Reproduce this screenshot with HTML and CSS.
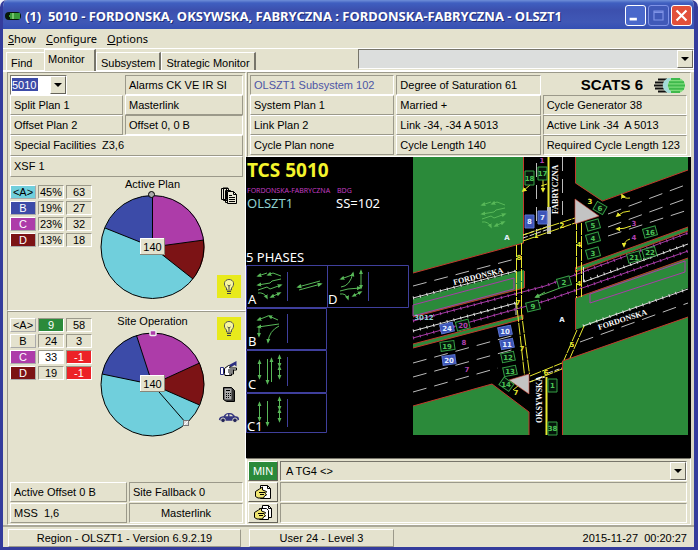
FILE: index.html
```html
<!DOCTYPE html>
<html lang="en">
<head>
<meta charset="utf-8">
<title>(1) 5010 - FORDONSKA, OKSYWSKA, FABRYCZNA</title>
<link rel="stylesheet" href="styles.css">
</head>
<body>
<div class="window">
  <header class="titlebar">
    <svg class="app-icon" viewBox="0 0 16 10" aria-hidden="true"><rect x="0" y="1" width="16" height="8" rx="4" fill="#071808"/><path d="M5 3h10M4 5h11M5 7h10" stroke="#48c24a" stroke-width="1.6"/><path d="M8 2v6" stroke="#b6f0a0"/></svg>
    <h1>(1)&nbsp; 5010 - FORDONSKA, OKSYWSKA, FABRYCZNA : FORDONSKA-FABRYCZNA - OLSZT1</h1>
    <div class="caption-buttons">
      <button class="cap" aria-label="Minimize"><svg viewBox="0 0 21 21"><rect x="4" y="13" width="8" height="3" fill="#fff"/></svg></button>
      <button class="cap cap-max" aria-label="Maximize" disabled><svg viewBox="0 0 21 21"><path d="M5.500 5.500h10v10h-10zM5 7h11" fill="none" stroke="#7f93e6" stroke-width="1.300"/></svg></button>
      <button class="cap cap-close" aria-label="Close"><svg viewBox="0 0 21 21"><path d="M5 5l11 11M16 5L5 16" stroke="#fff" stroke-width="2.400"/></svg></button>
    </div>
  </header>
  <nav class="menubar">
    <button><u>S</u>how</button><button><u>C</u>onfigure</button><button><u>O</u>ptions</button>
  </nav>
  <div class="tabrow">
    <button class="tab tab-first">Find</button><button class="tab tab-on">Monitor</button><button class="tab">Subsystem</button><button class="tab">Strategic Monitor</button>
    <div class="combo combo-wide"><input type="text" aria-label="Message"><button aria-label="Open list"><svg viewBox="0 0 8 4"><path d="M0 0h8L4 4z"/></svg></button></div>
  </div>

  <main class="main">
    <section class="left">
      <div class="group group-plan">
        <div class="pair">
          <div class="combo combo-site"><input type="text" value="5010" aria-label="Site"><button aria-label="Open list"><svg viewBox="0 0 8 4"><path d="M0 0h8L4 4z"/></svg></button></div>
          <div class="cell">Alarms CK VE IR SI</div>
          <div class="cell up">Split Plan 1</div><div class="cell up">Masterlink</div>
          <div class="cell up">Offset Plan 2</div><div class="cell">Offset 0, 0 B</div>
          <div class="cell up wide">Special Facilities&nbsp; Z3,6</div>
          <div class="cell up wide">XSF 1</div>
        </div>
        <div class="plan">
          <table class="phases">
            <tr><th class="pa">&lt;A&gt;</th><td>45%</td><td>63</td></tr>
            <tr><th class="pb">B</th><td>19%</td><td>27</td></tr>
            <tr><th class="pc">C</th><td>23%</td><td>32</td></tr>
            <tr><th class="pd">D</th><td>13%</td><td>18</td></tr>
          </table>
          <div class="chart">
            <h2>Active Plan</h2>
            <svg viewBox="99 191 107 109">
              <circle cx="152.500" cy="247" r="51.500" fill="#70cfdc"/>
              <path d="M152.500 247V195.500A51.500 51.500 0 0 1 204 240z" fill="#ad3ca9"/>
              <path d="M152.500 247L204 240A51.500 51.500 0 0 1 193 279z" fill="#7c1315"/>
              <path d="M152.500 247L105 228A51.500 51.500 0 0 1 152.500 195.500z" fill="#3c4ba8"/>
              <path d="M152.500 195.500V247L204 240M152.500 247L193 279M152.500 247L105 228" fill="none" stroke="#000"/>
              <circle cx="152.500" cy="247" r="51.500" fill="none" stroke="#000"/>
              <circle cx="151.500" cy="194.500" r="3" fill="#aaa" stroke="#000"/>
              <rect x="140" y="238" width="25" height="17" fill="#e4e2ce"/><path d="M140.500 255v-16.500H165" fill="none" stroke="#fff"/><path d="M140 254.500h24.500V238" fill="none" stroke="#888679"/>
              <text x="152.500" y="251" class="svg-label">140</text>
            </svg>
          </div>
          <div class="icons">
            <button class="ico" aria-label="Plans"><svg width="18" height="18" viewBox="0 0 18 18"><g fill="#e9e7d6" stroke="#000"><path d="M1.500 1.500h5v11h-5zM3.500 1.500h5v12h-5zM5.500 3.500h5v12h-5z"/><path d="M7.500 4.500h6l3 3v9h-9z"/></g><path d="M13.500 4.500v3h3M9 8.500h3M9 10.500h6M9 12.500h6M9 14.500h6M3 1h5" stroke="#000" fill="none"/></svg></button>
            <button class="ico bulb" aria-label="Lamp"><svg width="14" height="18" viewBox="0 0 14 18"><path d="M4.500 10C1 7 2 1.500 7 1.500S13 7 9.500 10v2h-5z" fill="#f7f7a0" stroke="#555"/><path d="M5 13.500h4M5 15.500h4M7 8v3M5.500 7L7 8l1.500-1" stroke="#444" fill="none"/></svg></button>
          </div>
        </div>
      </div>
      <div class="group group-site">
        <div class="plan">
          <table class="phases">
            <tr><th>&lt;A&gt;</th><td class="go">9</td><td>58</td></tr>
            <tr><th>B</th><td>24</td><td>3</td></tr>
            <tr><th class="pc">C</th><td class="wh">33</td><td class="neg">-1</td></tr>
            <tr><th class="pd">D</th><td>19</td><td class="neg">-1</td></tr>
          </table>
          <div class="chart">
            <h2>Site Operation</h2>
            <svg viewBox="99 329 107 109">
              <circle cx="152.500" cy="385.500" r="51.500" fill="#70cfdc"/>
              <path d="M152.500 385.500L136.500 336.500A51.500 51.500 0 0 1 199.500 364z" fill="#ad3ca9"/>
              <path d="M152.500 385.500L199.500 364A51.500 51.500 0 0 1 199.500 406z" fill="#7c1315"/>
              <path d="M152.500 385.500L102 375A51.500 51.500 0 0 1 136.500 336.500z" fill="#3c4ba8"/>
              <path d="M136.500 336.500l16 49L199.500 364M152.500 385.500L199.500 406M152.500 385.500L102 375M152.500 385.500L186 424" fill="none" stroke="#000"/>
              <circle cx="152.500" cy="385.500" r="51.500" fill="none" stroke="#000"/>
              <rect x="150" y="331.500" width="6" height="5" rx="1" fill="#ad3ca9" stroke="#eee" stroke-width="1.500"/>
              <rect x="183.500" y="421.500" width="5" height="5" fill="#ddd" stroke="#777"/><path d="M184 426l4-4" stroke="#fff"/>
              <rect x="140" y="376" width="25" height="17" fill="#e4e2ce"/><path d="M140.500 393v-16.500H165" fill="none" stroke="#fff"/><path d="M140 392.500h24.500V376" fill="none" stroke="#888679"/>
              <text x="152.500" y="389" class="svg-label">140</text>
            </svg>
          </div>
          <div class="icons">
            <button class="ico bulb" aria-label="Lamp"><svg width="14" height="18" viewBox="0 0 14 18"><path d="M4.500 10C1 7 2 1.500 7 1.500S13 7 9.500 10v2h-5z" fill="#f7f7a0" stroke="#555"/><path d="M5 13.500h4M5 15.500h4M7 8v3M5.500 7L7 8l1.500-1" stroke="#444" fill="none"/></svg></button>
            <button class="ico" aria-label="Manual control"><svg width="18" height="16" viewBox="0 0 18 16"><path d="M.500 7.500h3v7h-3z" fill="#fff" stroke="#2c2e80"/><path d="M4.500 13.500v-5l4-3 2 .5-1 2h7v2h-3v4h-2v1.500H5z" fill="#fff" stroke="#000"/><path d="M8 10h6M8 12h5M9 14h3" stroke="#000"/><path d="M9 5l7.500-4v5.500l-2-1.500-3 2z" fill="#2c2e80"/></svg></button>
            <button class="ico" aria-label="Controller"><svg width="14" height="16" viewBox="0 0 14 16"><path d="M1.500 1.500h8l3 3v11h-8l-3-2z" fill="#333" stroke="#000"/><path d="M2.500 2.500h7v11h-7z" fill="#aaa"/><path d="M4 4.500h4M4 7.500h1M6 7.500h1M8 7.500h1M4 9.500h1M6 9.500h1M8 9.500h1M4 11.500h1M6 11.500h1" stroke="#000"/></svg></button>
            <button class="ico" aria-label="Vehicles"><svg width="22" height="12" viewBox="0 0 24 12"><path d="M1 8c0-3 3-4 5-4 2-3 4-3.500 7-3.500 3 0 4 2 6 3.500 3 0 4 1 4 4l-2 1H3z" fill="#34357f"/><path d="M8 4c1-2 2-2.200 3-2.200V4zM12.500 1.800c2 0 3 1 4 2.200h-4z" fill="#e4e2ce"/><circle cx="5.500" cy="8.500" r="2.500" fill="#222457" stroke="#e4e2ce"/><circle cx="18.500" cy="8.500" r="2.500" fill="#222457" stroke="#e4e2ce"/></svg></button>
          </div>
        </div>
        <div class="pair pair-foot">
          <div class="cell up">Active Offset 0 B</div><div class="cell">Site Fallback 0</div>
          <div class="cell up">MSS&nbsp; 1,6</div><div class="cell mid">Masterlink</div>
        </div>
      </div>
    </section>

    <section class="right">
      <div class="summary">
        <div class="cell link">OLSZT1 Subsystem 102</div><div class="cell">Degree of Saturation 61</div>
        <div class="brand"><strong>SCATS 6</strong><svg width="31" height="15" viewBox="0 0 31 15"><path d="M4 1.500h9M1 4.500h9M0 7.500h9M1 10.500h9M4 13.500h9" stroke="#111" stroke-width="1.800"/><path d="M14 0C7 3 7 12 14 15h5C12 11 12 4 19 0z" fill="#a4dcd9"/><path d="M19 0C12 4 12 11 19 15h6q6-2 6-7.500T25 0z" fill="#7fdc7c"/><path d="M17 1h9M15 4.200h15M14 7.500h17M15 10.800h15M17 14h9" stroke="#3fb94c" stroke-width="2"/></svg></div>
        <div class="cell up">System Plan 1</div><div class="cell up">Married +</div><div class="cell">Cycle Generator 38</div>
        <div class="cell up">Link Plan 2</div><div class="cell up">Link -34, -34 A 5013</div><div class="cell">Active Link -34&nbsp; A 5013</div>
        <div class="cell up">Cycle Plan none</div><div class="cell up">Cycle Length 140</div><div class="cell">Required Cycle Length 123</div>
      </div>

      <div class="canvas">
      <svg class="map" viewBox="246 157 445 301" preserveAspectRatio="xMinYMin meet">
        <defs>
          <marker id="head" viewBox="0 0 6 6" refX="4" refY="3" markerWidth="5" markerHeight="5" markerUnits="userSpaceOnUse" orient="auto-start-reverse"><path d="M0 .500L6 3 0 5.500z" fill="#58b858"/></marker>
          <marker id="yhead" viewBox="0 0 6 6" refX="4" refY="3" markerWidth="5" markerHeight="5" markerUnits="userSpaceOnUse" orient="auto"><path d="M0 0L6 3 0 6z" fill="#e8e830"/></marker>
          <g id="flow" class="arrow"><path d="M10 2L1 5"/><path d="M24 5l-8-3-5 2"/><path d="M24 8l-9 2-2 2-12 2"/><path d="M1 19l9-3 3 2 11-4"/><path d="M1 22q6-1 9 5"/><path d="M23 22l-9 4" class="both"/></g>
        </defs>

        <text x="247" y="177" class="site-name">TCS 5010</text>
        <text x="247" y="193" class="tiny-title">FORDONSKA-FABRYCZNA</text><text x="337" y="193" class="tiny-title">BDG</text>
        <text x="247" y="208" class="info cyan">OLSZT1</text><text x="336" y="208" class="info">SS=102</text>
        <text x="246" y="262" class="info">5 PHASES</text>

        <g class="frame">
          <path d="M246.500 265.500h162v42h-162zM327.500 265.500v42M246.500 308.500h80v41h-80zM246.500 350.500h80v42h-80zM246.500 393.500h80v39h-80z"/>
          <path d="M287.500 272v29M368.500 272v29M287.500 314v29M287.500 357v29M287.500 399v28"/>
        </g>
        <g class="info"><text x="248" y="304">A</text><text x="328" y="304">D</text><text x="248" y="346">B</text><text x="248" y="389">C</text><text x="247" y="431">C1</text></g>
        <use href="#flow" x="257" y="271"/>
        <g class="arrow">
          <path d="M320 281l-22 6"/><path d="M299 290l22-6"/>
          <path d="M352 275l-11 4"/><path d="M341 287q9-1 12-14"/><path d="M340 291l8-2 12-1"/><path d="M361 271v17" class="both"/><path d="M340 294q6-1 8 5"/><path d="M361 292l-8 4" class="both"/>
          <path d="M268 316l-10 4"/><path d="M278 320l-9-4"/><path d="M279 324l-21 3"/><path d="M279 326q-10 5-11 16"/><path d="M259 327v9"/>
          <path d="M259.500 361v17" class="both"/><path d="M267.500 359v24"/><path d="M271.500 382v-23"/><path d="M279.500 356v10" class="both"/><path d="M279.500 367v11" class="both"/>
          <path d="M259.500 403v17" class="both"/><path d="M267.500 401v24"/><path d="M279.500 398v11" class="both"/><path d="M279.500 410v11" class="both"/>
        </g>

        <g class="grass">
          <path d="M413 157h110v86l-110 30zM413 299l111-29v18l-111 29zM413 344l110-29v4l-110 29zM413 406l79-22 37 28v23H413zM575 157h113v13l-86 31-27-18zM575 268l113-41v4l-113 41zM575 298l113-40v30l-113 42zM562 361l126-44v118H562z"/>
        </g>
        <g class="kerb">
          <path d="M523.500 157v86l-110.500 30M524.500 271v17M413 317l111-29M413 344l110-29v4l-110 29M413 406l79-22 37 28v23M575.500 157v26l27 18 85.500-31M575.500 268v4l112.500-41M575 268l113-41M688 258l-112.500 40v32M688 317l-125.500 44v74"/>
        </g>
        <g class="white">
          <path d="M413 298l103-27M413 331l103-28v12M583.500 267v15L688 244M583 326l105-37"/>
          <path d="M413 298l103-27M413 331l103-28M584 281l104-37M583 326l105-37" class="ticks"/>
          <path d="M413 286l102-27M413 363l102-28M413 377l102-28M413 392l85-24M608 214l80-30M608 227l80-29M608 236l80-26M580 342l108-39M536.500 163v72M562.500 157v64" class="lanes"/>
          <path d="M523 235l26-9M523 238l26-9M529 382l16-5M548 373l14-5" stroke-dasharray="5 2"/>
          <path d="M547 207h4v27h-4z" fill="#bbb" stroke="none"/>
        </g>
        <g class="tram">
          <path d="M413 321l132-35 143-53M413 338l132-37 143-50M413 305l101-27v11l-101 27zM590 294l95-33v11l-95 31z"/>
          <path d="M413 321l132-35 143-53M413 338l132-37 143-50" class="ticks"/>
        </g>
        <g class="walk">
          <path d="M548.500 157v50M546.500 377v58" stroke-width="2"/>
          <path d="M516.500 245v58l8 72M521.500 243v70l8 61M523 235l52-17M523 241l52-18M576.500 218v80M581.500 223v74M577 330l-13 30M584 326l-14 32M530 376l32-13M530 382l32-13M513 390l16-13" stroke-dasharray="12 1"/>
          <path d="M530 185l-7 6" class="turn"/><path d="M543 178v13" class="turn"/><path d="M630 198q-6 1-8-3" class="turn"/><path d="M630 211q-7 0-13 5" class="turn"/><path d="M631 226q-7 3-14 3" class="turn"/><path d="M630 239q-6 2-6 7" class="turn"/>
          <path d="M547 184l-6 2"/>
        </g>
        <path d="M575 199l24 17-24 8zM509 380l20-6v20z" fill="#c3c3c3" stroke="#d84a3a" stroke-width=".600"/>
        <use href="#flow" x="481" y="200"/>
        <g class="arrow"><path d="M560 288l-24 9"/><path d="M545 292l-9 5"/></g>

        <g class="det">
          <path d="M525 171h9v14h-9zM538 167h9v13h-9zM548 379h9v13h-9zM548 422h9v13h-9z"/>
          <path class="on" d="M525 215h9v13h-9zM538 211h9v13h-9z"/>
          <g transform="rotate(-14 447 328)"><path class="on" d="M440.500 323.500h13v9h-13z"/><path d="M456.500 324.500h13v9h-13z"/></g>
          <g transform="rotate(-8 447 346)"><path d="M440.500 341.500h14v9h-14z"/></g>
          <g transform="rotate(-8 449 360)"><path class="on" d="M442.500 355.500h13v9h-13z"/></g>
          <g transform="rotate(-12 505 331)"><path class="on" d="M498.500 326.500h13v9h-13z"/></g>
          <g transform="rotate(-12 507 344)"><path class="on" d="M500.500 339.500h13v9h-13z"/></g>
          <g transform="rotate(-12 508 357)"><path d="M501.500 352.500h13v9h-13z"/></g>
          <g transform="rotate(-12 510 371)"><path d="M503.500 366.500h13v9h-13z"/></g>
          <g transform="rotate(35 506 384)"><path d="M500.500 379.500h12v9h-12z"/></g>
          <g transform="rotate(30 600 208)"><path d="M594.500 203.500h11v9h-11z"/></g>
          <g transform="rotate(-16 593 225)"><path d="M586.500 220.500h13v9h-13z"/></g>
          <g transform="rotate(-16 593 238)"><path d="M586.500 233.500h13v9h-13z"/></g>
          <g transform="rotate(-16 593 253)"><path d="M586.500 248.500h13v9h-13z"/></g>
          <g transform="rotate(-16 650 232)"><path d="M643.500 227.500h13v9h-13z"/></g>
          <g transform="rotate(-16 634 257)"><path d="M627.500 252.500h13v9h-13zM643.500 252.500h13v9h-13z"/></g>
          <g transform="rotate(-16 564 282)"><path d="M557.500 277.500h13v9h-13z"/></g>
          <g transform="rotate(-14 533 306)"><path d="M526.500 301.500h13v9h-13z"/></g>
        </g>
        <g class="num green-num">
          <text x="529.500" y="181">18</text><text x="542.500" y="176">17</text><text x="552.500" y="388">1</text><text x="552.500" y="431">38</text>
          <text x="447" y="349">19</text><text x="508" y="360">12</text><text x="510" y="374">13</text><text x="506" y="387">14</text>
          <text x="600" y="211">6</text><text x="593" y="228">5</text><text x="593" y="241">4</text><text x="593" y="256">3</text><text x="650" y="235">16</text><text x="634" y="260">21</text><text x="650" y="255">22</text><text x="564" y="285">2</text><text x="533" y="309">9</text>
        </g>
        <g class="num white-num"><text x="529.500" y="224">8</text><text x="542.500" y="220">7</text><text x="447" y="331">24</text><text x="449" y="363">20</text><text x="505" y="334">10</text><text x="507" y="347">11</text><text x="562" y="322">A</text><text x="507" y="240">A</text></g>
        <g class="num yellow-num"><text x="536" y="238">1</text><text x="519" y="260">8</text><text x="518" y="305">7</text><text x="522" y="351">7</text><text x="516" y="395">7</text><text x="546" y="375">6</text><text x="562" y="228">2</text><text x="590" y="204">3</text><text x="579" y="247">4</text><text x="579" y="286">4</text><text x="572" y="347">5</text></g>
        <g class="num mag-num"><text x="542" y="163">1</text><text x="463" y="328">20</text><text x="464" y="345">8</text><text x="467" y="372">7</text><text x="634" y="226">3</text><text x="634" y="240">4</text></g>
        <text x="424" y="320" class="num cyan">3012</text>
        <g class="street">
          <text transform="translate(454 285) rotate(-14)">FORDONSKA</text>
          <text transform="translate(599 330) rotate(-18)">FORDONSKA</text>
          <text transform="translate(558 214) rotate(-90)">FABRYCZNA</text>
          <text transform="translate(542 423) rotate(-90)">OKSYWSKA</text>
        </g>
      </svg>
      </div>

      <div class="messages">
        <button class="min">MIN</button>
        <div class="combo combo-msg"><input type="text" value="A TG4 &lt;&gt;" aria-label="Mode"><button aria-label="Open list"><svg viewBox="0 0 8 4"><path d="M0 0h8L4 4z"/></svg></button></div>
        <button class="note" aria-label="Note"><svg width="18" height="16" viewBox="0 0 18 16"><path d="M6.500 1.500h7l3 3v10h-10z" fill="#fff" stroke="#000"/><path d="M13.500 1.500v3h3" fill="none" stroke="#000"/><path d="M1.500 12.500v-5l4-2.500 3-2v3l4 1.500-1 2 1 1.500-2 1-1 2H4z" fill="#f0e670" stroke="#000"/><path d="M5 8.500h6M6 10.500h4" stroke="#000"/></svg></button>
        <div class="cell"></div>
        <button class="note" aria-label="Notes"><svg width="20" height="16" viewBox="0 0 20 16"><path d="M9.500.500h6l3 3v9h-9z" fill="#fff" stroke="#000"/><path d="M6.500 3.500h7l2 2v9h-9z" fill="#fff" stroke="#000"/><path d="M15.500.500v3h3" fill="none" stroke="#000"/><path d="M1.500 12.500v-5l4-2.500 3-2v3l4 1.500-1 2 1 1.500-2 1-1 2H4z" fill="#f0e670" stroke="#000"/><path d="M5 8.500h6M6 10.500h4" stroke="#000"/></svg></button>
        <div class="cell"></div>
      </div>
    </section>
  </main>

  <footer class="status">
    <span class="pane pane-region">Region - OLSZT1 - Version 6.9.2.19</span>
    <span class="pane pane-user">User 24 - Level 3</span>
    <time class="clock">2015-11-27&nbsp; 00:20:27</time>
  </footer>
</div>
</body>
</html>
```
FILE: styles.css
```css
* { box-sizing: border-box; }
:root { --face: #e4e2ce; --dark: #9b998a; --blue: #3c4ba8; }
body { margin: 0; background: #f4f4fb; color: #000; font: 11px/16px "Liberation Sans", Arial, sans-serif; }
button, input { font: inherit; color: inherit; padding: 0; margin: 0; border: 0; background: none; border-radius: 0; }
svg { display: block; }

.window { min-height: calc(100vh - 2px); margin-bottom: 2px; display: flex; flex-direction: column; background: var(--face); border: solid #343c9c; border-width: 0 4px 3px 3px; border-radius: 7px 7px 0 0; overflow: hidden; }

.titlebar { height: 29px; display: flex; align-items: center; gap: 4px; padding: 2px 2px 0 2px; background: linear-gradient(#6f8fd8 0, #3f5fc0 3px, #3c50ae 10px, #4058b6 22px, #3550b4 29px); color: #fff; }
.app-icon { width: 16px; height: 10px; }
.titlebar h1 { margin: 0; flex: 1; font: bold 13px/18px "Noto Sans", sans-serif; white-space: nowrap; text-shadow: 1px 1px #1d2c78; }
.caption-buttons { display: flex; gap: 2px; }
.cap { width: 21px; height: 21px; border: 1px solid #fff; border-radius: 3px; background: #4a68cb; }
.cap svg { width: 19px; height: 19px; }
.cap-max { border-color: #7f93e6; background: #4059b8; }
.cap-close { background: #e2503a; }

.menubar { height: 20px; display: flex; gap: 10px; padding: 0 5px; border-bottom: 1px solid #fff; font: 11px/18px "Noto Sans", sans-serif; }
.menubar u { text-underline-offset: 1px; }

.tabrow { height: 23px; display: flex; align-items: flex-start; padding-left: 3px; border-bottom: 2px solid #fff; }
.tab { height: 18px; margin-top: 3px; padding: 2px 4px 0; border: solid #fff; border-width: 1px 2px 0 1px; border-right-color: #77756a; line-height: 14px; white-space: nowrap; }
.tab-first { width: 38px; border-right: 0; text-align: left; }
.tab-on { height: 22px; width: 52px; margin-top: 0; padding: 1px 3px 4px; background: var(--face); text-align: left; }

.combo { display: flex; height: 20px; border: 1px solid; border-color: #77756a #fff #fff #77756a; }
.combo input { flex: 1; min-width: 0; }
.combo button { width: 16px; display: grid; place-items: center; background: var(--face); border: 1px solid; border-color: #fff #66645a #66645a #fff; }
.combo button svg { width: 8px; height: 4px; }
.combo-wide { flex: 1; margin-left: 102px; background: #dcdedd; }
.combo-site { width: 57px; background: #fff; }
.combo-site input { flex: 0 1 26px; margin: 2px 0 3px 1px; background: var(--blue); color: #fff; }
.combo-site button { margin-left: auto; }
.combo-msg input { padding-left: 5px; }

.main { flex: 1; display: flex; }
.left { width: 239px; margin-left: 4px; display: flex; flex-direction: column; }
.right { flex: 1; min-width: 0; display: flex; flex-direction: column; border-right: 3px solid #d7d5c2; }

.cell { height: 20px; padding: 1px 3px; border: 1px solid; border-color: var(--dark) #fff #fff var(--dark); white-space: nowrap; overflow: hidden; }
.cell.up { border-color: #fff var(--dark) var(--dark) #fff; }
.cell.mid { text-align: center; }
.cell.link { color: #4d55a5; }

.group { border: 1px solid; border-color: var(--dark) #fff #fff var(--dark); padding: 2px; }
.group-site { flex: 1; display: flex; flex-direction: column; padding: 3px 2px 1px; }
.pair { display: grid; grid-template-columns: 113px 1fr; column-gap: 2px; }
.wide { grid-column: 1 / -1; height: 21px; }
.pair-foot { margin-top: auto; grid-template-columns: 117px 1fr; row-gap: 1px; }

.plan { display: grid; grid-template-columns: 89px 107px 1fr; }
.group-plan .plan { height: 130px; margin-top: 1px; }
.phases { border-spacing: 2px; margin: 5px 0 0 -2px; justify-self: start; align-self: start; }
.group-site .phases { margin-top: 1px; }
.phases th, .phases td { width: 26px; height: 14px; padding: 0; border: 1px solid; border-color: var(--dark) #fff #fff var(--dark); font-weight: normal; line-height: 12px; text-align: center; }
.phases th { border-color: #fff #aaa #aaa #fff; }
.phases .pa { background: #70cfdc; }
.phases .pb { background: #3c4ba8; color: #fff; }
.phases .pc { background: #ad3ca9; color: #fff; }
.phases .pd { background: #7c1315; color: #fff; }
.phases .go { background: #2b8a3a; color: #fff; }
.phases .wh { background: #fff; }
.phases .neg { background: #ec2227; color: #fff; }
.chart { width: 107px; }
.chart h2 { margin: 0; font: 11px/13px "Liberation Sans", sans-serif; text-align: center; white-space: nowrap; }
.chart svg { width: 107px; height: 109px; }
.svg-label { font: 11px "Liberation Sans", sans-serif; text-anchor: middle; }
.icons { width: 25px; justify-self: end; margin-right: 2px; display: flex; flex-direction: column; align-items: center; }
.ico { display: grid; place-items: center; }
.bulb { width: 24px; height: 23px; background: #e8ea1c; }
.group-plan .icons { justify-content: space-between; padding: 9px 0 10px; }
.group-site .icons { gap: 10px; }
.group-site .bulb { margin: 2px 0 10px; }

.summary { display: grid; grid-template-columns: repeat(3, 1fr); column-gap: 2px; padding: 2px 3px 1px 2px; margin-left: 1px; border: 1px solid; border-color: var(--dark) #fff #fff var(--dark); }
.brand { display: flex; align-items: center; justify-content: flex-end; gap: 11px; padding-right: 2px; }
.brand strong { font: bold 15px/18px "Liberation Sans", sans-serif; }

.canvas { flex: 1; min-height: 301px; background: #000; }
.map { width: 100%; height: 100%; }
.site-name { font: bold 19px "Noto Sans", sans-serif; fill: #f4f42c; }
.tiny-title { font: 7px "Noto Sans", sans-serif; fill: #c03cc0; }
.info { font: 13px "Noto Sans", sans-serif; fill: #fff; }
.cyan, .info.cyan { fill: #8fd0d0; }
.frame { fill: none; stroke: #3f3f9c; }
.arrow { fill: none; stroke: #58b858; }
.arrow path { marker-end: url(#head); }
.arrow .both { marker-start: url(#head); }
.grass { fill: #2b8a3a; }
.kerb { fill: none; stroke: #c2392c; }
.white { fill: none; stroke: #ddd; }
.lanes { stroke: #bbb; stroke-dasharray: 14 8; }
.ticks { stroke-width: 3; stroke-dasharray: 1 6; }
.tram { fill: none; stroke: #a83ca8; }
.walk { fill: none; stroke: #e8e830; }
.walk .turn { marker-end: url(#yhead); }
.det { fill: #04140a; stroke: #35a045; }
.det .on { fill: #3c55b8; stroke: #5b75d0; }
.num { font: bold 7px "DejaVu Sans", sans-serif; text-anchor: middle; }
.green-num { fill: #4cc456; }
.white-num { fill: #e6f0ff; }
.yellow-num { fill: #e8e830; }
.mag-num { fill: #b040b0; }
.street { font: bold 8px "Liberation Serif", serif; fill: #fff; }

.messages { display: grid; grid-template-columns: 30px 1fr; grid-auto-rows: 20px; gap: 1px 2px; padding: 2px 3px 1px 1px; border: 1px solid; border-color: #77756a #fff #fff #fff; }
.min { background: #2b8a3a; color: #fff; border: 1px solid; border-color: #fff #66645a #66645a #fff; }
.note { display: grid; place-items: center; border: 1px solid; border-color: #fff #66645a #66645a #fff; }

.status { height: 22px; display: flex; gap: 8px; padding: 2px 7px 1px 5px; border-top: 2px solid #aaa898; }
.pane { height: 18px; border: 1px solid; border-color: #fff var(--dark) var(--dark) #fff; text-align: center; }
.pane-region { width: 233px; }
.pane-user { width: 145px; }
.clock { margin-left: auto; line-height: 18px; }
```
